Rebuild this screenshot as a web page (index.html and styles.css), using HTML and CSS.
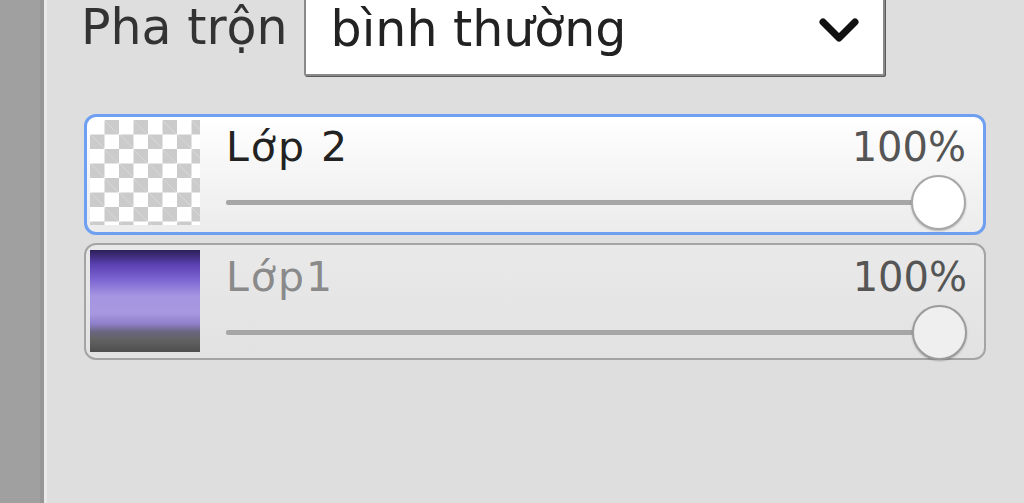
FILE: index.html
```html
<!DOCTYPE html>
<html lang="vi">
<head>
<meta charset="utf-8">
<title>Lớp</title>
<link rel="stylesheet" href="styles.css">
</head>
<body>
<div class="app">
  <div class="sidebar"></div>
  <div class="divider"></div>
  <main class="panel">
    <div class="blend-row">
      <span class="blend-label">Pha trộn</span>
      <div class="select">
        <span class="select-value">bình thường</span>
        <svg class="chevron" width="44" height="30" viewBox="0 0 44 30">
          <polyline points="6,6 22,22 38,6" fill="none" stroke="#111" stroke-width="7" stroke-linecap="round" stroke-linejoin="round"/>
        </svg>
      </div>
    </div>
    <div class="layers">
      <div class="layer layer-active">
        <div class="thumb thumb-empty"></div>
        <div class="layer-body">
          <div class="layer-head">
            <span class="layer-name">Lớp 2</span>
            <span class="layer-opacity">100%</span>
          </div>
          <div class="slider">
            <div class="track"></div>
            <div class="knob"></div>
          </div>
        </div>
      </div>
      <div class="layer layer-idle">
        <div class="thumb thumb-image"></div>
        <div class="layer-body">
          <div class="layer-head">
            <span class="layer-name">Lớp1</span>
            <span class="layer-opacity">100%</span>
          </div>
          <div class="slider">
            <div class="track"></div>
            <div class="knob"></div>
          </div>
        </div>
      </div>
    </div>
  </main>
</div>
</body>
</html>
```
FILE: styles.css
```css
html, body {
  margin: 0;
  padding: 0;
  height: 100%;
  overflow: hidden;
}
body {
  background: #dedede;
  font-family: "DejaVu Sans", "Liberation Sans", sans-serif;
}
.app {
  display: flex;
  height: 503px;
}
.sidebar {
  width: 40px;
  background: #a0a0a0;
  border-right: 4px solid #969696;
}
.divider {
  width: 3px;
  background: #e9e9e9;
}
.panel {
  flex: 1;
  padding: 0 38px 0 34px;
  display: flex;
  flex-direction: column;
}
.blend-row {
  display: flex;
  align-items: flex-start;
  margin-top: -12px;
}
.blend-label {
  font-size: 49px;
  line-height: 56px;
  color: #333;
  padding-top: 12px;
  margin-right: 16px;
}
.select {
  width: 581px;
  height: 88px;
  background: #fff;
  border: 2px solid #8a8a8a;
  box-shadow: 1px 1px 0 #5a5a5a;
  border-radius: 2px;
  display: flex;
  align-items: flex-start;
  justify-content: space-between;
  padding: 12px 22px 0 25px;
  box-sizing: border-box;
}
.select-value {
  font-size: 49px;
  line-height: 56px;
  color: #222;
}
.chevron {
  margin-top: 14px;
}
.layers {
  margin-top: 38px;
  padding-left: 3px;
  display: flex;
  flex-direction: column;
  gap: 8px;
}
.layer {
  display: flex;
  border-radius: 12px;
  padding: 3px 17px 0 3px;
  box-sizing: border-box;
}
.layer-active {
  height: 121px;
  border: 3px solid #6f9ff0;
  background: linear-gradient(#ffffff, #f3f3f3 60%, #ececec);
}
.layer-idle {
  height: 117px;
  border: 2px solid #a4a4a4;
  background: linear-gradient(#e9e9e9, #e2e2e2);
  padding-left: 4px;
  padding-top: 5px;
}
.thumb {
  width: 110px;
  height: 105px;
  flex: none;
}
.thumb-empty {
  background-color: #fff;
  background-image:
    linear-gradient(45deg, #cbcbcb 25%, transparent 25%, transparent 75%, #cbcbcb 75%),
    linear-gradient(45deg, #cbcbcb 25%, transparent 25%, transparent 75%, #cbcbcb 75%);
  background-size: 29px 29px;
  background-position: 0 0, 14.5px 14.5px;
}
.thumb-image {
  height: 102px;
  background: linear-gradient(#2c2058 0%, #5a40b0 14%, #7a62d0 28%, #a595e2 45%, #a898e0 62%, #8f80cc 72%, #6b6680 80%, #626262 88%, #4e4e4e 100%);
}
.layer-body {
  flex: 1;
  margin-left: 26px;
  display: flex;
  flex-direction: column;
}
.layer-head {
  display: flex;
  justify-content: space-between;
  padding-top: 3px;
  font-size: 41px;
  line-height: 48px;
}
.layer-name {
  letter-spacing: 2px;
}
.layer-active .layer-name {
  color: #222;
}
.layer-idle .layer-name {
  color: #8a8a8a;
}
.layer-opacity {
  font-size: 40px;
  color: #555;
}
.slider {
  position: relative;
  height: 55px;
  margin-top: 4px;
}
.track {
  position: absolute;
  left: 0;
  right: 27px;
  top: 25px;
  height: 5px;
  background: #a6a6a6;
  border-radius: 2px;
}
.knob {
  position: absolute;
  right: 0;
  top: 0;
  width: 51px;
  height: 51px;
  border-radius: 50%;
  border: 2px solid #a8a8a8;
  background: #fff;
  box-shadow: 0 1px 2px rgba(0,0,0,0.25);
}
.layer-idle .knob {
  background: #efefef;
  border-color: #9c9c9c;
}
```
